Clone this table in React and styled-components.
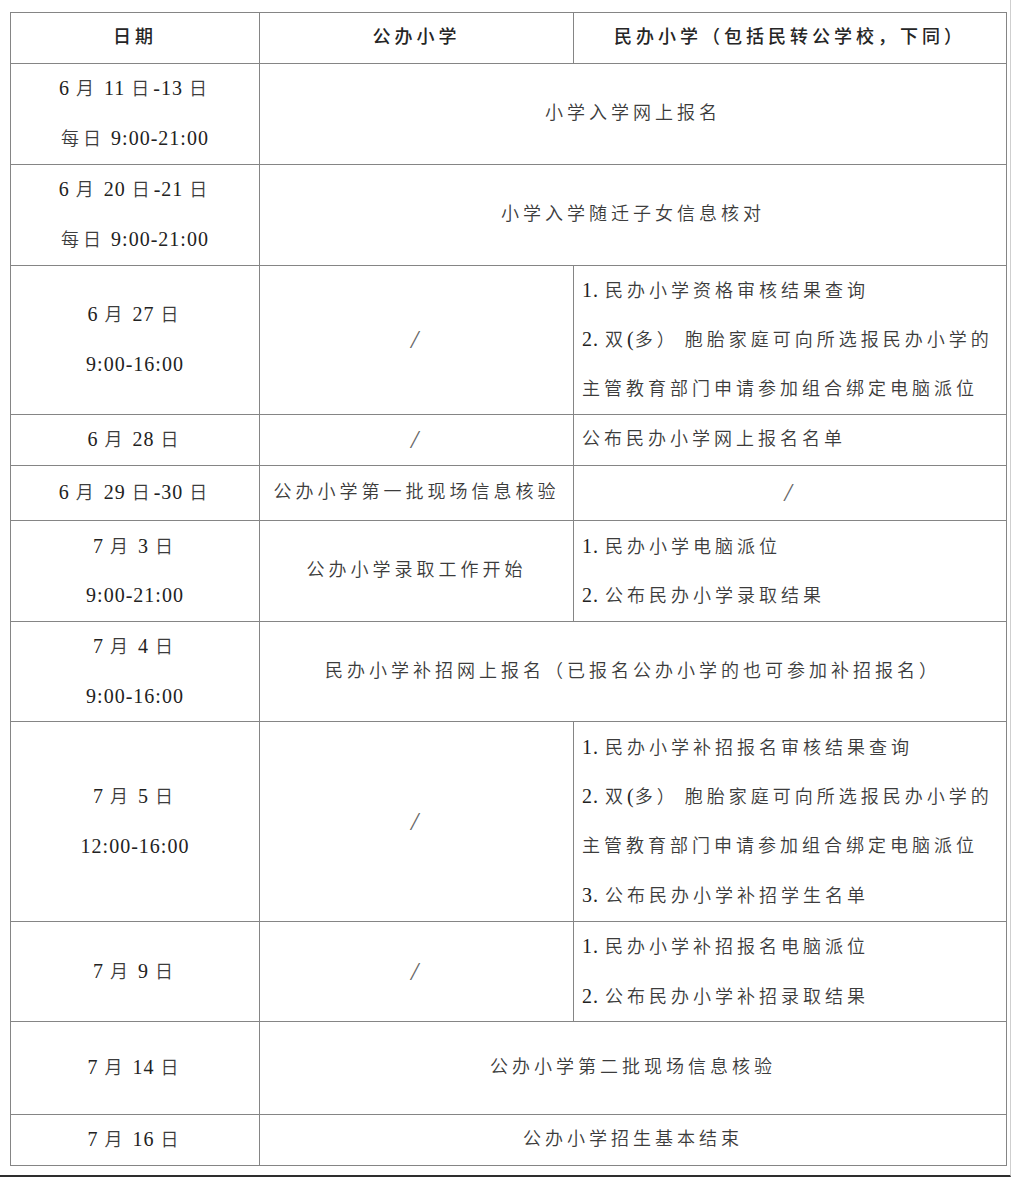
import React from 'react';
import styled, { createGlobalStyle } from 'styled-components';

const GlobalStyle = createGlobalStyle`
    html, body {
        margin: 0;
        padding: 0;
        background: #ffffff;
    }
    body {
        font-family: "Liberation Serif", "Noto Sans CJK SC", serif;
    }
`;

const Page = styled.div`
    box-sizing: border-box;
    width: 1011px;
    height: 1177px;
    padding: 12px 0 0 10px;
    border-right: 1px solid #cfcfcf;
    border-bottom: 2px solid #2e2e2e;
    background: #fff;
`;

const Table = styled.table`
    border-collapse: collapse;
    table-layout: fixed;
    width: 996px;
    color: #3c3c3c;
    font-size: 18px;
    font-weight: 350;
`;

const Col = styled.col`
    width: ${(p) => p.$w}px;
`;

const Cell = styled.td`
    border: 1px solid #858585;
    height: ${(p) => p.$h}px;
    padding: ${(p) => (p.$left ? '0 0 0 8px' : '0')};
    text-align: ${(p) => (p.$left ? 'left' : 'center')};
    vertical-align: middle;
    box-sizing: border-box;
`;

const HeadCell = styled(Cell)`
    color: #262626;
    font-weight: 500;
`;

const Line = styled.div`
    height: 49.5px;
    line-height: 49.5px;
    overflow: visible;
    white-space: nowrap;
    letter-spacing: 4px;
`;

const Lat = styled.span`
    font-size: 20px;
    letter-spacing: 1px;
    color: #222;
    font-weight: 400;
`;

const Slash = styled.span`
    font-family: "Liberation Serif", serif;
    font-size: 26px;
    font-style: italic;
    font-weight: 400;
    color: #666;
`;

// split ascii runs from CJK runs so the digits get tighter spacing
const Text = ({ children }) => {
    const parts = children.split(/([\x20-\x7e]+)/).filter(Boolean);
    return parts.map((part, i) =>
        /^[\x20-\x7e]+$/.test(part) ? <Lat key={i}>{part}</Lat> : <span key={i}>{part}</span>
    );
};

const Lines = ({ items }) => items.map((t, i) => (
    <Line key={i}>{t === '/' ? <Slash>/</Slash> : <Text>{t}</Text>}</Line>
));

const rows = [
    { h: 101, date: ['6 月 11 日-13 日', '每日 9:00-21:00'], all: '小学入学网上报名' },
    { h: 101, date: ['6 月 20 日-21 日', '每日 9:00-21:00'], all: '小学入学随迁子女信息核对' },
    {
        h: 149, date: ['6 月 27 日', '9:00-16:00'], pub: '/',
        pri: ['1. 民办小学资格审核结果查询', '2. 双(多） 胞胎家庭可向所选报民办小学的', '主管教育部门申请参加组合绑定电脑派位'],
    },
    { h: 51, date: ['6 月 28 日'], pub: '/', pri: ['公布民办小学网上报名名单'] },
    { h: 55, date: ['6 月 29 日-30 日'], pub: '公办小学第一批现场信息核验', pri: '/' },
    { h: 101, date: ['7 月 3 日', '9:00-21:00'], pub: '公办小学录取工作开始', pri: ['1. 民办小学电脑派位', '2. 公布民办小学录取结果'] },
    { h: 100, date: ['7 月 4 日', '9:00-16:00'], all: '民办小学补招网上报名（已报名公办小学的也可参加补招报名）' },
    {
        h: 200, date: ['7 月 5 日', '12:00-16:00'], pub: '/',
        pri: ['1. 民办小学补招报名审核结果查询', '2. 双(多） 胞胎家庭可向所选报民办小学的', '主管教育部门申请参加组合绑定电脑派位', '3. 公布民办小学补招学生名单'],
    },
    { h: 100, date: ['7 月 9 日'], pub: '/', pri: ['1. 民办小学补招报名电脑派位', '2. 公布民办小学补招录取结果'] },
    { h: 93, date: ['7 月 14 日'], all: '公办小学第二批现场信息核验' },
    { h: 49, date: ['7 月 16 日'], all: '公办小学招生基本结束' },
];

const App = () => {
    return (
        <Page>
            <GlobalStyle />
            <Table>
                <colgroup>
                    <Col $w={249} />
                    <Col $w={314} />
                    <Col $w={433} />
                </colgroup>
                <tbody>
                    <tr>
                        <HeadCell $h={50}><Line>日期</Line></HeadCell>
                        <HeadCell $h={50}><Line>公办小学</Line></HeadCell>
                        <HeadCell $h={50}><Line>民办小学（包括民转公学校，下同）</Line></HeadCell>
                    </tr>
                    {rows.map((row, index) => (
                        <tr key={index}>
                            <Cell $h={row.h}><Lines items={row.date} /></Cell>
                            {row.all ? (
                                <Cell $h={row.h} colSpan={2}><Lines items={[row.all]} /></Cell>
                            ) : (
                                <>
                                    <Cell $h={row.h}><Lines items={[row.pub]} /></Cell>
                                    {row.pri === '/' ? (
                                        <Cell $h={row.h}><Lines items={['/']} /></Cell>
                                    ) : (
                                        <Cell $h={row.h} $left><Lines items={row.pri} /></Cell>
                                    )}
                                </>
                            )}
                        </tr>
                    ))}
                </tbody>
            </Table>
        </Page>
    );
};

export default App;
